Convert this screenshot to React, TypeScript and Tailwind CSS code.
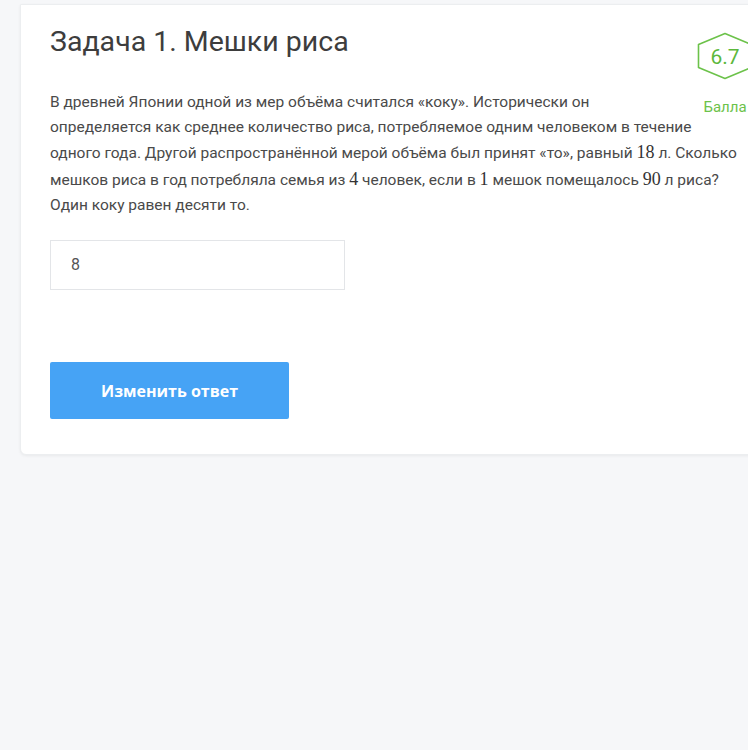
import React from "react";

const num = "font-['Liberation_Serif',serif] text-[18px] text-[#333]";

const ScoreBadge = () => (
   <div className="absolute left-[674px] top-[27px] flex w-[60px] flex-col items-center">
      <div className="relative h-[48px] w-[58px]">
         <svg width="58" height="48" viewBox="0 0 58 48" className="absolute inset-0">
            <path
               d="M29 1.5 L55.5 12.5 L55.5 35.5 L29 46.5 L2.5 35.5 L2.5 12.5 Z"
               fill="none"
               stroke="#6cc24a"
               strokeWidth="1.6"
               strokeLinejoin="round"
            />
         </svg>
         <span className="absolute inset-0 flex items-center justify-center pt-[3px] font-['Roboto',sans-serif] text-[21px] text-[#5cb83c]">
            6.7
         </span>
      </div>
      <span className="mt-[20px] font-['Roboto',sans-serif] text-[15px] leading-none text-[#6cc24a]">Балла</span>
   </div>
);

const App = () => {
   return (
      <div className="h-[750px] w-[748px] overflow-hidden bg-[#f6f7f9]">
         <div className="relative ml-[20px] mt-[4px] h-[451px] w-[760px] rounded-bl-[6px] border border-[#eceef0] bg-white pl-[29px] pt-[20px] shadow-[0_1px_3px_rgba(0,0,0,0.06)]">
            <h1 className="font-['Roboto',sans-serif] text-[28.5px] leading-[34px] text-[#3d3d3d]">Задача 1. Мешки риса</h1>

            <ScoreBadge />

            <p className="mt-[31px] whitespace-nowrap font-['Roboto',sans-serif] text-[15.5px] leading-[25.2px] text-[#4a4a4a]">
               В древней Японии одной из мер объёма считался «коку». Исторически он
               <br />
               определяется как среднее количество риса, потребляемое одним человеком в течение
               <br />
               одного года. Другой распространённой мерой объёма был принят «то», равный <span className={num}>18</span> л. Сколько
               <br />
               мешков риса в год потребляла семья из <span className={num}>4</span> человек, если в <span className={num}>1</span> мешок
               помещалось <span className={num}>90</span> л риса?
               <br />
               Один коку равен десяти то.
            </p>

            <div className="mt-[22px] flex h-[50px] w-[295px] items-center border border-[#e3e5e8] pl-[20px] font-['Roboto',sans-serif] text-[16px] text-[#555]">
               8
            </div>

            <button className="mt-[72px] flex h-[57px] w-[239px] items-center justify-center rounded-[2px] bg-[#46a3f5] font-['Open_Sans',sans-serif] text-[16px] font-bold text-white">
               Изменить ответ
            </button>
         </div>
      </div>
   );
};

export default App;
